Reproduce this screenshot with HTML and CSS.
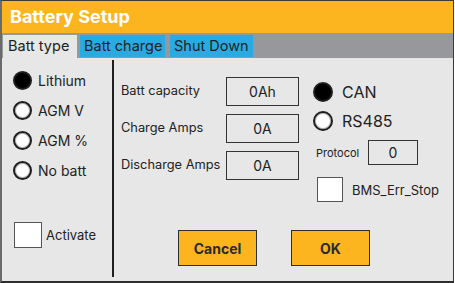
FILE: index.html
```html
<!DOCTYPE html>
<html lang="en">
<head>
    <meta charset="UTF-8">
    <meta name="viewport" content="width=device-width, initial-scale=1.0">
    <title>Battery Setup</title>
    <link rel="stylesheet" href="styles.css">
</head>
<body>

    <div class="window">
        <div class="title-bar">Battery Setup</div>

        <div class="tabs">
            <div class="tab active">Batt type</div>
            <div class="tab charge">Batt charge</div>
            <div class="tab shutdown">Shut Down</div>
        </div>

        <div class="panel">
            <!-- battery type column -->
            <div class="types">
                <div class="radio-row"><span class="radio checked"></span>Lithium</div>
                <div class="radio-row"><span class="radio"></span>AGM V</div>
                <div class="radio-row"><span class="radio"></span>AGM %</div>
                <div class="radio-row"><span class="radio"></span>No batt</div>
                <div class="check-row activate"><span class="check"></span>Activate</div>
            </div>

            <div class="divider"></div>

            <div class="main">
                <div class="main-top">
                    <div class="fields">
                        <div class="field">
                            <span class="field-label">Batt capacity</span>
                            <span class="value-box">0Ah</span>
                        </div>
                        <div class="field">
                            <span class="field-label">Charge Amps</span>
                            <span class="value-box">0A</span>
                        </div>
                        <div class="field">
                            <span class="field-label">Discharge Amps</span>
                            <span class="value-box">0A</span>
                        </div>
                    </div>

                    <div class="options">
                        <div class="radio-row big"><span class="radio checked"></span>CAN</div>
                        <div class="radio-row big"><span class="radio"></span>RS485</div>
                        <div class="protocol">
                            <span class="protocol-label">Protocol</span>
                            <span class="value-box small">0</span>
                        </div>
                        <div class="check-row bms"><span class="check"></span>BMS_Err_Stop</div>
                    </div>
                </div>

                <div class="buttons">
                    <button class="btn">Cancel</button>
                    <button class="btn">OK</button>
                </div>
            </div>
        </div>
    </div>

</body>
</html>
```

FILE: styles.css
```css
body {
    margin: 0;
    background-color: #ffffff;
    font-family: 'Inter', 'Roboto', sans-serif;
    color: #222222;
}

.window {
    width: 454px;
    height: 283px;
    box-sizing: border-box;
    border: 1px solid #3a3a3a;
    border-left: 2px solid #6a6a6a;
    border-bottom: 2px solid #2e2e2e;
    display: flex;
    flex-direction: column;
    background-color: #e6e7e6;
}

.title-bar {
    height: 32px;
    flex: none;
    background-color: #fdb51f;
    color: #ffffff;
    font-weight: 700;
    font-size: 18px;
    line-height: 32px;
    padding-left: 8px;
}

/* Tab strip */
.tabs {
    height: 25px;
    flex: none;
    box-sizing: border-box;
    background-color: #97989b;
    padding: 2px 0 0 1px;
    display: flex;
    align-items: flex-start;
}

.tab {
    height: 22px;
    line-height: 22px;
    font-size: 14.5px;
    padding: 0 0 0 4px;
    box-sizing: border-box;
    background-color: #29abe2;
    white-space: nowrap;
    overflow: hidden;
}
.tab.active {
    height: 23px;
    width: 74px;
    background-color: #e6e7e6;
    padding-left: 5px;
    margin-right: 3px;
}
.tab.charge {
    width: 85px;
    margin-right: 5px;
}
.tab.shutdown {
    width: 83px;
}

.panel {
    flex: 1;
    display: flex;
}

/* Left column */
.types {
    width: 110px;
    flex: none;
    display: flex;
    flex-direction: column;
    padding: 7px 0 0 11px;
    box-sizing: border-box;
}

.radio-row {
    height: 30px;
    display: flex;
    align-items: center;
    font-size: 14px;
}

.radio {
    width: 19px;
    height: 19px;
    box-sizing: border-box;
    border-radius: 50%;
    border: 2px solid #1e1e1e;
    background-color: #ffffff;
    box-shadow: inset 0 0 0 1px #b8b8b8;
    margin-right: 6px;
    flex: none;
}
.radio.checked {
    background-color: #000000;
    box-shadow: none;
}

.check-row {
    display: flex;
    align-items: center;
    font-size: 13px;
}

.check {
    background-color: #ffffff;
    border: 1.5px solid #555555;
    box-sizing: border-box;
    flex: none;
}

.activate {
    margin-top: auto;
    margin-bottom: 33px;
    margin-left: 1px;
}
.activate .check {
    width: 28px;
    height: 26px;
    margin-right: 4px;
}

.divider {
    width: 2px;
    flex: none;
    background-color: #1f1f1f;
    margin: 2px 0 4px 0;
}

/* Right area */
.main {
    flex: 1;
    display: flex;
    flex-direction: column;
}

.main-top {
    display: flex;
    padding: 19px 0 0 7px;
}

.fields {
    display: flex;
    flex-direction: column;
    gap: 8px;
}

.field {
    display: flex;
    align-items: center;
    height: 29px;
}

.field-label {
    width: 105px;
    font-size: 12.8px;
    margin-top: -2px;
}

.value-box {
    width: 73px;
    height: 29px;
    box-sizing: border-box;
    border: 1px solid #333333;
    display: flex;
    align-items: center;
    justify-content: center;
    font-size: 14px;
}
.value-box.small {
    width: 50px;
    height: 25px;
}

.options {
    margin-left: 14px;
    display: flex;
    flex-direction: column;
}

.radio-row.big {
    height: 29px;
    font-size: 16px;
}
.radio-row.big .radio {
    width: 20px;
    height: 20px;
    margin-right: 9px;
}

.protocol {
    display: flex;
    align-items: center;
    margin-top: 5px;
    height: 25px;
}
.protocol-label {
    font-size: 11px;
    margin-left: 3px;
    width: 52px;
}

.bms {
    margin-top: 12px;
    margin-left: 4px;
}
.bms .check {
    width: 26px;
    height: 25px;
    margin-right: 9px;
}

.buttons {
    margin-top: auto;
    margin-bottom: 15px;
    padding-left: 64px;
    display: flex;
    gap: 34px;
}

.btn {
    width: 79px;
    height: 36px;
    background-color: #fdb51f;
    border: 1px solid #2e2e2e;
    font-family: 'Inter', 'Roboto', sans-serif;
    font-weight: 700;
    font-size: 14px;
    color: #2a2a2a;
    padding: 0;
}
```
